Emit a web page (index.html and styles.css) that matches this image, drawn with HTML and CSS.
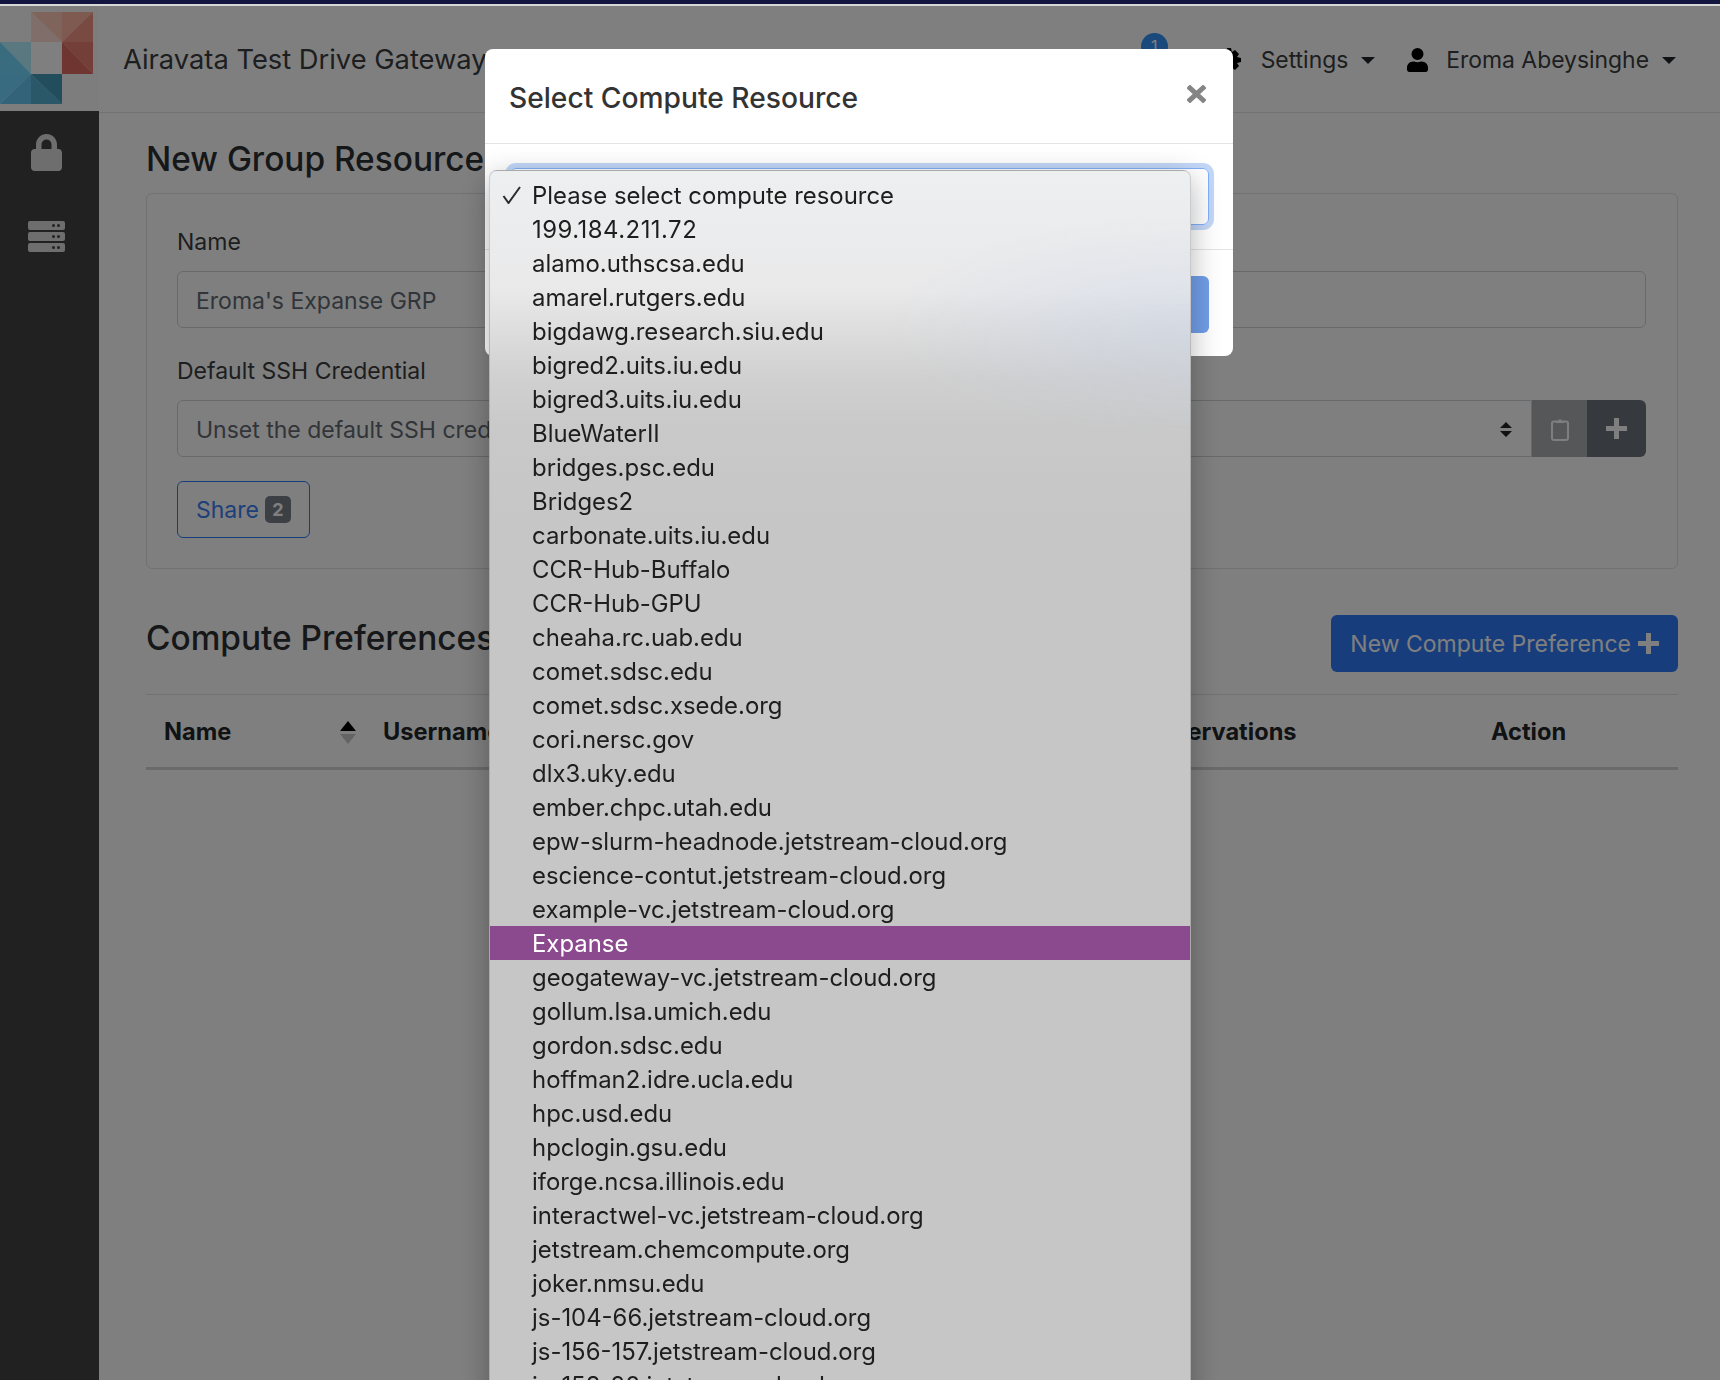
FILE: index.html
```html
<!DOCTYPE html>
<html lang="en">
<head>
    <meta charset="UTF-8"/>
    <title>Airavata Test Drive Gateway</title>
    <link rel="stylesheet" href="styles.css">
</head>
<body>
    <div class="top-strip"></div>

    <header class="site-header">
        <a class="logo-cell" href="#">
            <svg class="logo" viewBox="0 0 93 92" width="93" height="92">
                <polygon points="31,0 62,0 62,30" fill="#ffc8b8"/>
                <polygon points="31,0 62,30 31,30" fill="#ffdcd4"/>
                <polygon points="62,0 93,0 62,30" fill="#ffb4a0"/>
                <polygon points="93,0 93,30 62,30" fill="#f09484"/>
                <polygon points="62,30 93,30 93,62 " fill="#e87e70"/>
                <polygon points="62,30 93,62 62,62" fill="#dc6a62"/>
                <rect x="31" y="30" width="31" height="32" fill="#fff"/>
                <polygon points="0,30 31,30 31,62" fill="#b4f0ff"/>
                <polygon points="0,30 31,62 0,62" fill="#74d8ff"/>
                <polygon points="0,62 31,62 0,92" fill="#70d6ff"/>
                <polygon points="31,62 31,92 0,92" fill="#66c6f2"/>
                <polygon points="31,62 62,92 31,92" fill="#54b0d0"/>
                <polygon points="31,62 62,62 62,92" fill="#449ab8"/>
            </svg>
        </a>
        <span class="brand">Airavata Test Drive Gateway</span>
        <nav class="site-nav">
            <div class="nav-item nav-bell">
                <svg viewBox="0 0 448 512" width="24" height="27"><path d="M224 512c35 0 64-29 64-64H160c0 35 29 64 64 64zm216-150c-19-21-56-52-56-154 0-78-54-140-128-155V32a32 32 0 0 0-64 0v21C118 68 64 130 64 208c0 102-37 133-56 154-6 6-8 14-8 22 0 16 13 32 32 32h384c19 0 32-16 32-32 0-8-2-16-8-22z"/></svg>
                <span class="bell-badge">1</span>
            </div>
            <div class="nav-item">
                <svg class="nav-icon" viewBox="0 0 24 24" width="24" height="24"><path d="M10 0h4l1 4 3-2 4 4-2 3 4 1v4l-4 1 2 3-4 4-3-2-1 4h-4l-1-4-3 2-4-4 2-3-4-1v-4l4-1-2-3 4-4 3 2z"/></svg>
                <span>Settings</span><i class="caret"></i>
            </div>
            <div class="nav-item">
                <svg class="nav-icon user-icon" viewBox="0 0 448 512" width="21" height="24"><path d="M224 256a128 128 0 1 0 0-256 128 128 0 0 0 0 256zm90 32h-17a174 174 0 0 1-146 0h-17C60 288 0 348 0 422v42c0 26 22 48 48 48h352c26 0 48-22 48-48v-42c0-74-60-134-134-134z"/></svg>
                <span>Eroma Abeysinghe</span><i class="caret"></i>
            </div>
        </nav>
    </header>

    <div class="layout">
        <aside class="sidebar">
            <svg class="side-lock" viewBox="0 0 31 37" width="31" height="37"><path d="M5 15V10.500C5 4.700 9.700 0 15.500 0S26 4.700 26 10.500V15h1.500c1.900 0 3.500 1.600 3.500 3.500v15c0 1.900-1.600 3.500-3.500 3.500h-24C1.600 37 0 35.400 0 33.500v-15C0 16.600 1.600 15 3.500 15zm5.500 0h10v-4.500a5 5 0 0 0-10 0z"/></svg>
            <div class="side-server"><span><i></i><i></i></span><span><i></i><i></i></span><span><i></i><i></i></span></div>
        </aside>

        <main class="content">
            <h1 class="page-title">New Group Resource</h1>
            <section class="card">
                <label class="field-label">Name</label>
                <div class="text-input">Eroma's Expanse GRP</div>
                <label class="field-label ssh-label">Default SSH Credential</label>
                <div class="input-group">
                    <div class="text-input select-input">
                        <span>Unset the default SSH credential</span>
                        <svg viewBox="0 0 12 15" width="12" height="15"><path d="M6 0l6 6H0zM0 9h12l-6 6z"/></svg>
                    </div>
                    <div class="addon addon-clip">
                        <svg viewBox="0 0 18 24" width="18" height="24"><path fill="none" stroke="#fff" stroke-width="2" d="M5 4.500H3a2 2 0 0 0-2 2V21a2 2 0 0 0 2 2h12a2 2 0 0 0 2-2V6.500a2 2 0 0 0-2-2h-2"/><path fill="#fff" d="M5 6V3.500h2.300a1.800 1.800 0 0 1 3.400 0H13V6z"/></svg>
                    </div>
                    <div class="addon addon-plus"><i class="plus"></i></div>
                </div>
                <button class="btn-outline">Share <span class="count">2</span></button>
            </section>

            <div class="section-head">
                <h1 class="page-title">Compute Preferences</h1>
                <button class="btn-primary">New Compute Preference <i class="plus"></i></button>
            </div>

            <div class="table-head">
                <div class="th th-sort">Name
                    <svg viewBox="0 0 16 23" width="16" height="23"><path d="M8 0l8 10H0z" fill="#000"/><path d="M0 13h16L8 23z" fill="#c8c8c8"/></svg>
                </div>
                <div class="th">Username</div>
                <div class="th">Scratch Location</div>
                <div class="th">Reservations</div>
                <div class="th">Action</div>
            </div>
        </main>
    </div>

    <!-- modal sits above the dimmed page -->
    <div class="modal-backdrop">
        <div class="modal">
            <div class="modal-header">
                <span class="modal-title">Select Compute Resource</span>
                <svg class="modal-close" viewBox="0 0 19 18" width="19" height="18"><path d="M3 3l13 12M16 3L3 15" stroke="#858585" stroke-width="5" stroke-linecap="square"/></svg>
            </div>
            <div class="modal-body"><div class="modal-select"></div></div>
            <div class="modal-footer"><div class="modal-ok"></div></div>
        </div>

        <div class="select-list">
            <div class="opt"><svg viewBox="0 0 20 18" width="20" height="18" fill="none" stroke="#2c2c2c" stroke-width="2"><path d="M1.500 10l5 7L18 1"/></svg><span>Please select compute resource</span></div>
            <div class="opt opt-ip"><b></b><span>199.184.211.72</span></div>
            <div class="opt"><b></b><span>alamo.uthscsa.edu</span></div>
            <div class="opt"><b></b><span>amarel.rutgers.edu</span></div>
            <div class="opt"><b></b><span>bigdawg.research.siu.edu</span></div>
            <div class="opt"><b></b><span>bigred2.uits.iu.edu</span></div>
            <div class="opt"><b></b><span>bigred3.uits.iu.edu</span></div>
            <div class="opt"><b></b><span>BlueWaterII</span></div>
            <div class="opt"><b></b><span>bridges.psc.edu</span></div>
            <div class="opt"><b></b><span>Bridges2</span></div>
            <div class="opt"><b></b><span>carbonate.uits.iu.edu</span></div>
            <div class="opt"><b></b><span>CCR-Hub-Buffalo</span></div>
            <div class="opt"><b></b><span>CCR-Hub-GPU</span></div>
            <div class="opt"><b></b><span>cheaha.rc.uab.edu</span></div>
            <div class="opt"><b></b><span>comet.sdsc.edu</span></div>
            <div class="opt"><b></b><span>comet.sdsc.xsede.org</span></div>
            <div class="opt"><b></b><span>cori.nersc.gov</span></div>
            <div class="opt"><b></b><span>dlx3.uky.edu</span></div>
            <div class="opt"><b></b><span>ember.chpc.utah.edu</span></div>
            <div class="opt"><b></b><span>epw-slurm-headnode.jetstream-cloud.org</span></div>
            <div class="opt"><b></b><span>escience-contut.jetstream-cloud.org</span></div>
            <div class="opt"><b></b><span>example-vc.jetstream-cloud.org</span></div>
            <div class="opt opt-active"><b></b><span>Expanse</span></div>
            <div class="opt"><b></b><span>geogateway-vc.jetstream-cloud.org</span></div>
            <div class="opt"><b></b><span>gollum.lsa.umich.edu</span></div>
            <div class="opt"><b></b><span>gordon.sdsc.edu</span></div>
            <div class="opt"><b></b><span>hoffman2.idre.ucla.edu</span></div>
            <div class="opt"><b></b><span>hpc.usd.edu</span></div>
            <div class="opt"><b></b><span>hpclogin.gsu.edu</span></div>
            <div class="opt"><b></b><span>iforge.ncsa.illinois.edu</span></div>
            <div class="opt"><b></b><span>interactwel-vc.jetstream-cloud.org</span></div>
            <div class="opt"><b></b><span>jetstream.chemcompute.org</span></div>
            <div class="opt"><b></b><span>joker.nmsu.edu</span></div>
            <div class="opt"><b></b><span>js-104-66.jetstream-cloud.org</span></div>
            <div class="opt"><b></b><span>js-156-157.jetstream-cloud.org</span></div>
            <div class="opt"><b></b><span>js-158-20.jetstream-cloud.org</span></div>
        </div>
    </div>
</body>
</html>
```

FILE: styles.css
```css
* {
    box-sizing: border-box;
}

html, body {
    height: 100%;
}

body {
    margin: 0;
    display: flex;
    flex-direction: column;
    overflow: hidden;
    background-color: #fff;
    color: #3a3d40;
    font-family: Inter, "Noto Sans", sans-serif;
    font-size: 23px;
    line-height: 36px;
}

/* browser chrome edge, not dimmed by the backdrop */
.top-strip {
    position: relative;
    z-index: 2;
    height: 6px;
    flex: none;
    background-color: #d8d8d8;
    border-top: 4px solid #13163f;
}

.site-header {
    display: flex;
    align-items: center;
    flex: none;
    height: 107px;
    border-bottom: 1px solid #e4e4e4;
}

.logo-cell {
    display: flex;
    align-items: flex-start;
    align-self: flex-start;
    width: 99px;
    height: 105px;
    padding-top: 6px;
    background-color: #fafafa;
}

.brand {
    margin-top: 2px;
    margin-left: 24px;
    font-size: 27.300px;
    white-space: nowrap;
}

.site-nav {
    display: flex;
    align-items: center;
    margin-top: 2px;
    margin-left: auto;
    padding-right: 44px;
    gap: 32px;
    font-size: 22.900px;
}

.nav-item {
    display: flex;
    align-items: center;
}

.nav-bell {
    position: relative;
    margin-right: 27px;
}

.bell-badge {
    position: absolute;
    top: -14px;
    left: 7px;
    width: 27px;
    height: 27px;
    border-radius: 50%;
    background-color: #3492f8;
    color: #fff;
    font-size: 16px;
    line-height: 27px;
    text-align: center;
}

.nav-icon {
    margin-right: 20px;
}

.user-icon {
    margin-right: 18px;
}

.caret {
    width: 0;
    height: 0;
    margin-left: 13px;
    border-top: 7px solid #212529;
    border-left: 7px solid transparent;
    border-right: 7px solid transparent;
}

.layout {
    display: flex;
    flex: 1;
    min-height: 0;
}

.sidebar {
    display: flex;
    flex-direction: column;
    align-items: center;
    flex: none;
    width: 99px;
    margin-top: -2px;
    padding-top: 23px;
    padding-right: 6px;
    background-color: #424242;
}

.side-lock {
    fill: #dcdcdc;
}

.side-server {
    display: flex;
    flex-direction: column;
    gap: 2px;
    width: 37px;
    margin-top: 50px;
}

.side-server span {
    display: flex;
    justify-content: flex-end;
    align-items: center;
    gap: 2px;
    height: 9px;
    padding-right: 5px;
    border-radius: 2px;
    background-color: #dcdcdc;
}

.side-server i {
    width: 3px;
    height: 3px;
    border-radius: 50%;
    background-color: #424242;
}

.content {
    flex: 1;
    min-width: 0;
    padding: 0 42px 0 47px;
}

.page-title {
    margin: 0;
    color: #2c2f32;
    font-size: 33.400px;
    font-weight: 500;
    line-height: 44px;
    white-space: nowrap;
}

.content > .page-title {
    margin-top: 24px;
}

.card {
    height: 376px;
    margin-top: 12px;
    padding: 30px 31px 0 30px;
    border: 1px solid #dee2e6;
    border-radius: 6px;
}

.field-label {
    display: block;
    height: 36px;
    margin-bottom: 11px;
}

.ssh-label {
    margin-top: 25px;
}

.text-input {
    display: flex;
    align-items: center;
    height: 57px;
    padding: 2px 18px 0;
    border: 1px solid #ced4da;
    border-radius: 6px;
    color: #626a72;
    white-space: nowrap;
}

.input-group {
    display: flex;
    height: 57px;
}

.select-input {
    flex: 1;
    justify-content: space-between;
    padding-right: 19px;
    border-radius: 6px 0 0 6px;
}

.select-input svg {
    fill: #212529;
}

.addon {
    display: flex;
    justify-content: center;
    align-items: center;
    flex: none;
    height: 57px;
}

.addon-clip {
    width: 55px;
    background-color: #aaaeb2;
}

.addon-plus {
    width: 59px;
    background-color: #6c757d;
    border-radius: 0 6px 6px 0;
}

.plus {
    position: relative;
    display: inline-block;
    width: 21px;
    height: 21px;
    background:
        linear-gradient(#fff, #fff) center / 21px 5px no-repeat,
        linear-gradient(#fff, #fff) center / 5px 21px no-repeat;
    border-radius: 2px;
}

button {
    font-family: inherit;
    font-size: 23px;
    line-height: 36px;
}

.btn-outline {
    display: flex;
    align-items: center;
    gap: 6px;
    height: 57px;
    margin-top: 24px;
    padding: 0 18px;
    border: 1px solid #307af8;
    border-radius: 6px;
    background: none;
    color: #3a80f4;
}

.count {
    width: 26px;
    height: 27px;
    border-radius: 5px;
    background-color: #78808a;
    color: #fff;
    font-size: 18px;
    font-weight: 700;
    line-height: 27px;
    text-align: center;
}

.section-head {
    display: flex;
    justify-content: space-between;
    align-items: center;
    height: 57px;
    margin-top: 46px;
}

.section-head .page-title {
    margin-bottom: 11px;
}

.btn-primary {
    display: flex;
    align-items: center;
    gap: 7px;
    height: 57px;
    padding: 0 19px;
    border: none;
    border-radius: 6px;
    background-color: #307af8;
    color: #fff;
}

.table-head {
    display: grid;
    grid-template-columns: 219px 390px 372px 346px 1fr;
    height: 76px;
    margin-top: 22px;
    border-top: 1px solid #dee2e6;
    border-bottom: 3px solid #d0d4d8;
}

.th {
    display: flex;
    align-items: center;
    padding-top: 2px;
    padding-left: 18px;
    color: #212529;
    font-size: 23.600px;
    font-weight: 700;
    white-space: nowrap;
}

.th-sort {
    justify-content: space-between;
    padding-right: 9px;
}

.modal-backdrop {
    position: fixed;
    top: 0;
    left: 0;
    width: 100%;
    height: 100%;
    overflow: hidden;
    background-color: rgba(0, 0, 0, 0.5);
}

.modal {
    width: 748px;
    height: 307px;
    margin: 49px 0 0 485px;
    border-radius: 8px;
    background-color: #fff;
}

.modal-header {
    display: flex;
    justify-content: space-between;
    height: 95px;
    padding: 31px 27px 0 24px;
    border-bottom: 1px solid #e4e4e4;
}

.modal-title {
    color: #333;
    font-size: 28.200px;
    font-weight: 500;
    white-space: nowrap;
}

.modal-close {
    margin-top: 5px;
}

.modal-body {
    height: 106px;
    padding: 24px 24px 0 25px;
    border-bottom: 1px solid #e4e4e4;
}

.modal-select {
    height: 57px;
    border: 1px solid #80b0fb;
    border-radius: 6px;
    box-shadow: 0 0 0 5px #c3d7f8;
}

.modal-footer {
    display: flex;
    justify-content: flex-end;
    padding: 26px 24px 0 0;
}

.modal-ok {
    width: 140px;
    height: 57px;
    border-radius: 6px;
    background-color: #729fe9;
}

.select-list {
    position: absolute;
    top: 170px;
    left: 489px;
    width: 702px;
    height: 1300px;
    padding-top: 7px;
    border: 1px solid rgba(0, 0, 0, 0.14);
    border-bottom: none;
    border-radius: 8px 8px 0 0;
    background:
        radial-gradient(ellipse 300px 110px at 100% 155px, rgba(186, 203, 235, 0.3), rgba(186, 203, 235, 0)),
        linear-gradient(#eeeff0 0, #e9e9ea 120px, #dedede 157px, #d0d0d0 207px, #c9c9c9 257px, #c6c6c6 350px);
    box-shadow: 0 8px 30px rgba(0, 0, 0, 0.3);
    color: #1e1e1e;
    font-size: 23.900px;
}

.opt {
    display: grid;
    grid-template-columns: 42px 1fr;
    align-items: center;
    height: 34px;
    line-height: 32px;
    white-space: nowrap;
}

.opt span {
    padding-top: 2px;
}

.opt svg {
    justify-self: start;
    margin-left: 12px;
}

.opt-ip {
    letter-spacing: 0.5px;
}

.opt-active {
    background-color: #8b4a8e;
    color: #fff;
}
```
